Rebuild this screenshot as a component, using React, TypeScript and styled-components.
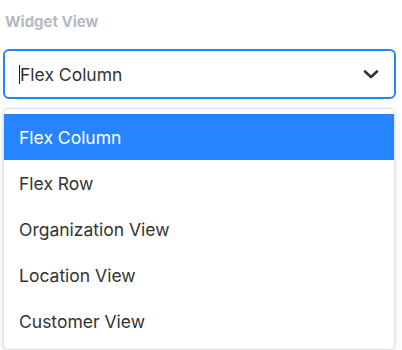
import React from "react";
import styled, { createGlobalStyle } from "styled-components";

const Global = createGlobalStyle`
  html, body { margin: 0; padding: 0; background: #ffffff; }
  body { font-family: Inter, "Noto Sans", Arial, sans-serif; }
`;

const Page = styled.div`
  padding: 13px 6px 0 3px;
  display: flex;
  flex-direction: column;
`;

const Label = styled.div`
  font-size: 15px;
  font-weight: 700;
  color: #b4bac3;
  line-height: 18px;
  padding-left: 2px;
  margin-bottom: 18px;
`;

const Control = styled.div`
  height: 50px;
  box-sizing: border-box;
  border: 2px solid #2684ff;
  border-radius: 6px;
  display: flex;
  align-items: center;
  padding: 0 15px 0 14px;
  background: #fff;
`;

const Value = styled.div`
  flex: 1;
  display: flex;
  align-items: center;
  font-size: 17.5px;
  color: #333333;
`;

const Caret = styled.span`
  width: 1px;
  height: 19px;
  background: #222;
`;

const Menu = styled.div`
  margin-top: 9px;
  margin-right: 1px;
  border: 1px solid #e2e2e2;
  border-radius: 5px;
  box-shadow: 0 0 0 1px rgba(0, 0, 0, 0.03), 0 4px 11px rgba(0, 0, 0, 0.08);
  padding: 5px 0;
  background: #fff;
`;

const Option = styled.div<{ $active?: boolean }>`
  height: 46px;
  display: flex;
  align-items: center;
  padding-left: 15px;
  font-size: 17.5px;
  color: ${(p) => (p.$active ? "#ffffff" : "#333333")};
  background: ${(p) => (p.$active ? "#2684ff" : "transparent")};
`;

const options = [
  "Flex Column",
  "Flex Row",
  "Organization View",
  "Location View",
  "Customer View",
];

export default function App() {
  return (
    <>
      <Global />
      <Page>
        <Label>Widget View</Label>
        <Control>
          <Value>
            <Caret />
            Flex Column
          </Value>
          <svg width="16" height="10" viewBox="0 0 16 10" fill="none">
            <path
              d="M2 2.5 L8 8 L14 2.5"
              stroke="#333"
              strokeWidth="2.6"
              strokeLinecap="round"
              strokeLinejoin="round"
            />
          </svg>
        </Control>
        <Menu>
          {options.map((o, i) => (
            <Option key={o} $active={i === 0}>
              {o}
            </Option>
          ))}
        </Menu>
      </Page>
    </>
  );
}
